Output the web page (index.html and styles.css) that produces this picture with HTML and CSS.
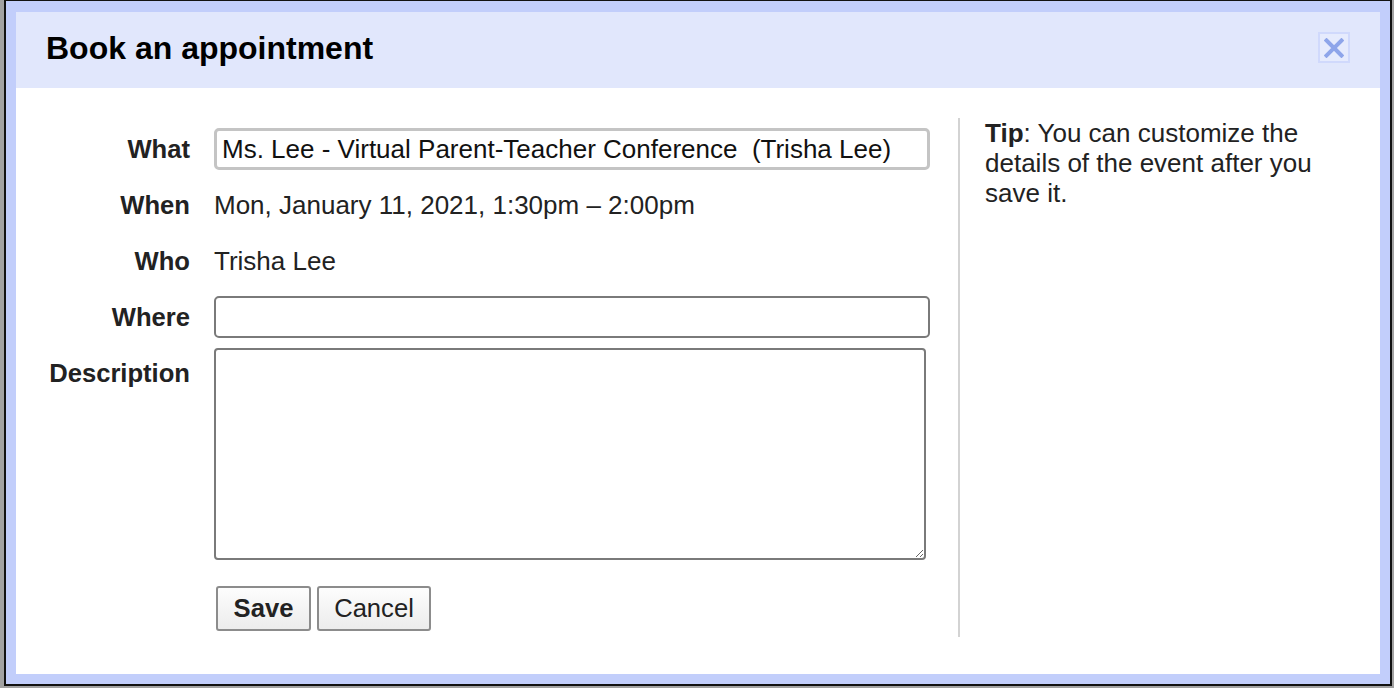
FILE: index.html
```html
<!DOCTYPE html>
<html>
<head>
<meta charset="utf-8">
<title>Book an appointment</title>
<link rel="stylesheet" href="styles.css">
</head>
<body>
<div class="frame">
  <div class="dialog">
    <div class="header">
      <h1 class="title">Book an appointment</h1>
      <button class="close" type="button" aria-label="Close">
        <svg width="20" height="20" viewBox="0 0 20 20"><path d="M2.5 2.5 L17.5 17.5 M17.5 2.5 L2.5 17.5" stroke="#8ea5ea" stroke-width="4" stroke-linecap="square" fill="none"/></svg>
      </button>
    </div>
    <div class="body">
      <form class="form">
        <div class="row">
          <label class="label">What</label>
          <input class="field field-what" type="text" value="Ms. Lee - Virtual Parent-Teacher Conference  (Trisha Lee)">
        </div>
        <div class="row">
          <span class="label">When</span>
          <span class="value">Mon, January 11, 2021, 1:30pm – 2:00pm</span>
        </div>
        <div class="row">
          <span class="label">Who</span>
          <span class="value">Trisha Lee</span>
        </div>
        <div class="row row-where">
          <label class="label">Where</label>
          <input class="field field-where" type="text" value="">
        </div>
        <div class="row row-desc">
          <label class="label label-desc">Description</label>
          <textarea class="textarea"></textarea>
        </div>
        <div class="buttons">
          <button class="btn btn-save" type="button">Save</button>
          <button class="btn btn-cancel" type="button">Cancel</button>
        </div>
      </form>
      <div class="tip"><span class="tip-key">Tip</span>: You can customize the details of the event after you save it.</div>
    </div>
  </div>
</div>
</body>
</html>
```
FILE: styles.css
```css
* { box-sizing: border-box; }
html, body { margin: 0; height: 100%; overflow: hidden; }
body {
  background: #a2a2a2;
  font-family: "Liberation Sans", Arial, sans-serif;
}
.frame {
  margin: -1px 0 0 4px;
  width: 1388px;
  border: 2px solid #111;
}
.dialog {
  border: 10px solid #c2cefb;
  border-top-width: 11px;
  background: #fff;
}
.header {
  height: 76px;
  background: #e1e7fc;
  display: flex;
  align-items: center;
  justify-content: space-between;
  padding: 0 30px;
}
.title {
  margin: 0 0 3px;
  font-size: 32px;
  font-weight: bold;
  color: #000;
}
.close {
  width: 32px;
  height: 31px;
  padding: 0;
  margin-bottom: 5px;
  border: 2px solid #d0d9fc;
  background: #e6ebfd;
  display: flex;
  align-items: center;
  justify-content: center;
}
.body {
  display: flex;
  height: 586px;
  padding: 30px 0 37px;
}
.form {
  width: 942px;
  flex-shrink: 0;
  padding-top: 10px;
  margin: 0;
}
.row {
  display: flex;
  align-items: center;
  min-height: 42px;
  margin-bottom: 14px;
}
.row-where { margin-bottom: 10px; }
.row-desc { align-items: flex-start; margin-bottom: 26px; }
.label {
  width: 174px;
  flex-shrink: 0;
  margin-right: 24px;
  text-align: right;
  font-weight: bold;
  font-size: 25.6px;
  color: #222;
}
.label-desc { padding-top: 11px; }
.value {
  font-size: 26px;
  color: #222;
}
.field {
  width: 716px;
  height: 42px;
  padding: 0 5px;
  font-family: "Liberation Sans", Arial, sans-serif;
  font-size: 26px;
  color: #111;
  border-radius: 5px;
  outline: none;
}
.field-what { border: 3px solid #c4c4c4; }
.field-where { border: 2px solid #7a7a7a; }
.textarea {
  width: 712px;
  height: 212px;
  border: 2px solid #7a7a7a;
  border-radius: 4px;
  resize: both;
  font-family: "Liberation Sans", Arial, sans-serif;
  font-size: 26px;
}
.buttons {
  display: flex;
  gap: 6px;
  margin-left: 200px;
}
.btn {
  height: 45px;
  padding: 0;
  border: 2px solid #8c8c8c;
  border-radius: 3px;
  background: linear-gradient(#fdfdfd, #ececec);
  font-family: "Liberation Sans", Arial, sans-serif;
  font-size: 25.6px;
  color: #222;
}
.btn-save { width: 95px; font-weight: bold; }
.btn-cancel { width: 114px; }
.tip {
  width: 422px;
  border-left: 2px solid #d3d3d3;
  padding: 0 45px 0 25px;
  font-size: 26px;
  line-height: 30px;
  color: #222;
}
.tip-key { font-weight: bold; }
```
